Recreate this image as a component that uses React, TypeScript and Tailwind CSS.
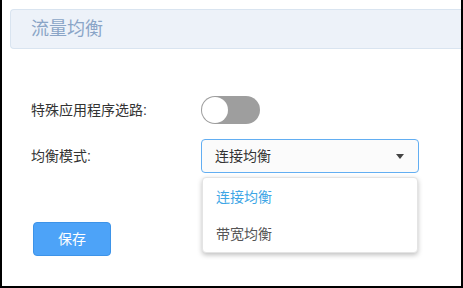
import { useState } from 'react';

const font = { fontFamily: '"Liberation Sans", "Noto Sans CJK SC", sans-serif' };

export default function App() {
  const [on, setOn] = useState(false);
  const [mode, setMode] = useState('连接均衡');

  return (
    <div
      className="w-[463px] h-[288px] bg-white border-l-2 border-r-2 border-b-2 border-black overflow-hidden"
      style={font}
    >
      {/* 标题栏 */}
      <div className="mt-[9px] ml-[8px] h-[40px] flex items-center pl-[20px] bg-[#edf2f9] border border-r-0 border-[#d9e4f0] rounded-l-[4px]">
        <span className="text-[18px] text-[#8aa5c7]">流量均衡</span>
      </div>

      <div className="pl-[29px] pt-[47px]">
        {/* 特殊应用程序选路 */}
        <div className="flex items-center h-[28px]">
          <span className="w-[170px] text-[14px] text-[#333]">特殊应用程序选路:</span>
          <button
            onClick={() => setOn(!on)}
            className={`relative w-[59px] h-[28px] rounded-full ${on ? 'bg-[#4da3f8]' : 'bg-[#9e9e9e]'}`}
          >
            <span
              className={`absolute top-[1px] w-[26px] h-[26px] rounded-full bg-white ${on ? 'left-[32px]' : 'left-[1px]'}`}
            />
          </button>
        </div>

        {/* 均衡模式 */}
        <div className="flex items-center h-[34px] mt-[15px]">
          <span className="w-[170px] text-[14px] text-[#333]">均衡模式:</span>
          <div className="relative">
            <div className="w-[218px] h-[34px] flex items-center justify-between pl-[13px] pr-[14px] bg-[#fbfbfb] border border-[#62aef2] rounded-[4px]">
              <span className="text-[14px] text-[#333]">{mode}</span>
              <svg width="8" height="5" viewBox="0 0 8 5">
                <path d="M0 0 H8 L4 5 Z" fill="#444" />
              </svg>
            </div>
            {/* 下拉菜单 */}
            <div className="absolute left-[1px] top-[38px] w-[216px] h-[76px] bg-white rounded-[4px] border border-[#e4e4e4] shadow-[0_2px_5px_rgba(0,0,0,0.25)] py-[1px] z-10">
              {['连接均衡', '带宽均衡'].map((m) => (
                <div
                  key={m}
                  onClick={() => setMode(m)}
                  className={`h-[37px] flex items-center pl-[13px] text-[14px] cursor-pointer ${
                    mode === m ? 'text-[#3ea6e6]' : 'text-[#555]'
                  }`}
                >
                  {m}
                </div>
              ))}
            </div>
          </div>
        </div>

        {/* 保存 */}
        <button className="mt-[49px] ml-[2px] w-[78px] h-[34px] bg-[#4da3f8] border border-[#3d93e8] rounded-[4px] text-white text-[14px]">
          保存
        </button>
      </div>
    </div>
  );
}
